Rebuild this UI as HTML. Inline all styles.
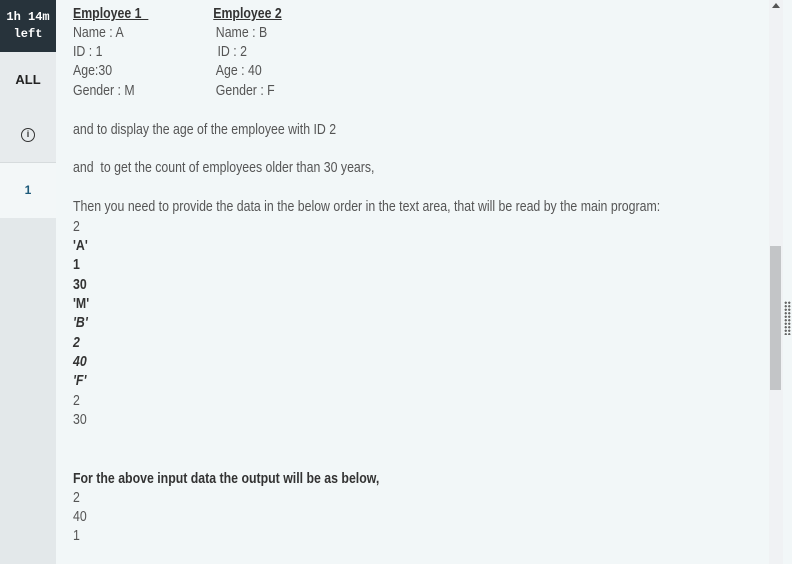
<!DOCTYPE html>
<html><head><style>
body{margin:0;width:792px;height:564px;overflow:hidden;background:#f2f7f8;font-family:"Liberation Sans",sans-serif;position:relative}
.sb{position:absolute;left:0;top:0;width:56px;height:564px;background:#e3e8ea}
.timer{position:absolute;left:0;top:0;width:56px;height:52px;background:#27333b;color:#fff;font-family:"Liberation Mono",monospace;font-weight:bold;font-size:12px;text-align:center;line-height:17px;padding-top:9px;box-sizing:border-box}
.all{position:absolute;left:0;top:52px;width:56px;height:110px;background:#e7ebed;border-bottom:1px solid #d6dbdd}
.all b{position:absolute;left:0;width:56px;top:20px;text-align:center;font-size:13px;color:#222}
.info{position:absolute;left:21px;top:128px;width:14px;height:14px;border:1.4px solid #333;border-radius:50%;box-sizing:border-box;font-size:9px;text-align:center;line-height:11px;color:#333;font-weight:bold}
.one{position:absolute;left:0;top:163px;width:56px;height:55px;background:#f3f7f8;color:#1d5a7a;font-weight:bold;font-size:12px;text-align:center;line-height:55px}
.c{position:absolute;left:73px;top:0;transform:scaleX(0.85);transform-origin:0 0;width:760px}
.c div{position:absolute;left:0;white-space:nowrap;font-size:14.5px;line-height:18px;color:#555}
.c b{color:#333}
.u{text-decoration:underline;font-weight:bold;color:#333}
.sc{position:absolute;left:769px;top:0;width:14px;height:564px;background:#f0f2f4}
.th{position:absolute;left:770px;top:246px;width:11px;height:144px;background:#c3c5c7}
.ar{position:absolute;left:772px;top:3px;width:0;height:0;border-left:4px solid transparent;border-right:4px solid transparent;border-bottom:5px solid #555}
.grip{position:absolute;left:784px;top:301px;width:7px;height:34px;background:radial-gradient(circle,#666 1px,transparent 1.3px) 0 0/3.5px 3.5px}
</style></head><body>
<div class="sb"></div>
<div class="timer">1h 14m<br>left</div>
<div class="all"><b>ALL</b></div>
<div class="info">i</div>
<div class="one">1</div>
<div class="c">
<div style="top:5px"><span class="u">Employee 1&nbsp;&nbsp;</span></div>
<div style="top:5px;left:165px"><span class="u">Employee 2</span></div>
<div style="top:24px">Name : A</div><div style="top:24px;left:168px">Name : B</div>
<div style="top:43px">ID : 1</div><div style="top:43px;left:170px">ID : 2</div>
<div style="top:62px">Age:30</div><div style="top:62px;left:168px">Age : 40</div>
<div style="top:82px">Gender : M</div><div style="top:82px;left:168px">Gender : F</div>
<div style="top:121px">and to display the age of the employee with ID 2</div>
<div style="top:159px">and&nbsp; to get the count of employees older than 30 years,</div>
<div style="top:198px">Then you need to provide the data in the below order in the text area, that will be read by the main program:</div>
<div style="top:218px">2</div>
<div style="top:237px"><b>'A'</b></div>
<div style="top:256px"><b>1</b></div>
<div style="top:276px"><b>30</b></div>
<div style="top:295px"><b>'M'</b></div>
<div style="top:314px"><b><i>'B'</i></b></div>
<div style="top:334px"><b><i>2</i></b></div>
<div style="top:353px"><b><i>40</i></b></div>
<div style="top:372px"><b><i>'F'</i></b></div>
<div style="top:392px">2</div>
<div style="top:411px">30</div>
<div style="top:470px"><b>For the above input data the output will be as below,</b></div>
<div style="top:489px">2</div>
<div style="top:508px">40</div>
<div style="top:527px">1</div>
</div>
<div class="sc"></div><div class="th"></div><div class="ar"></div><div class="grip"></div>
</body></html>
